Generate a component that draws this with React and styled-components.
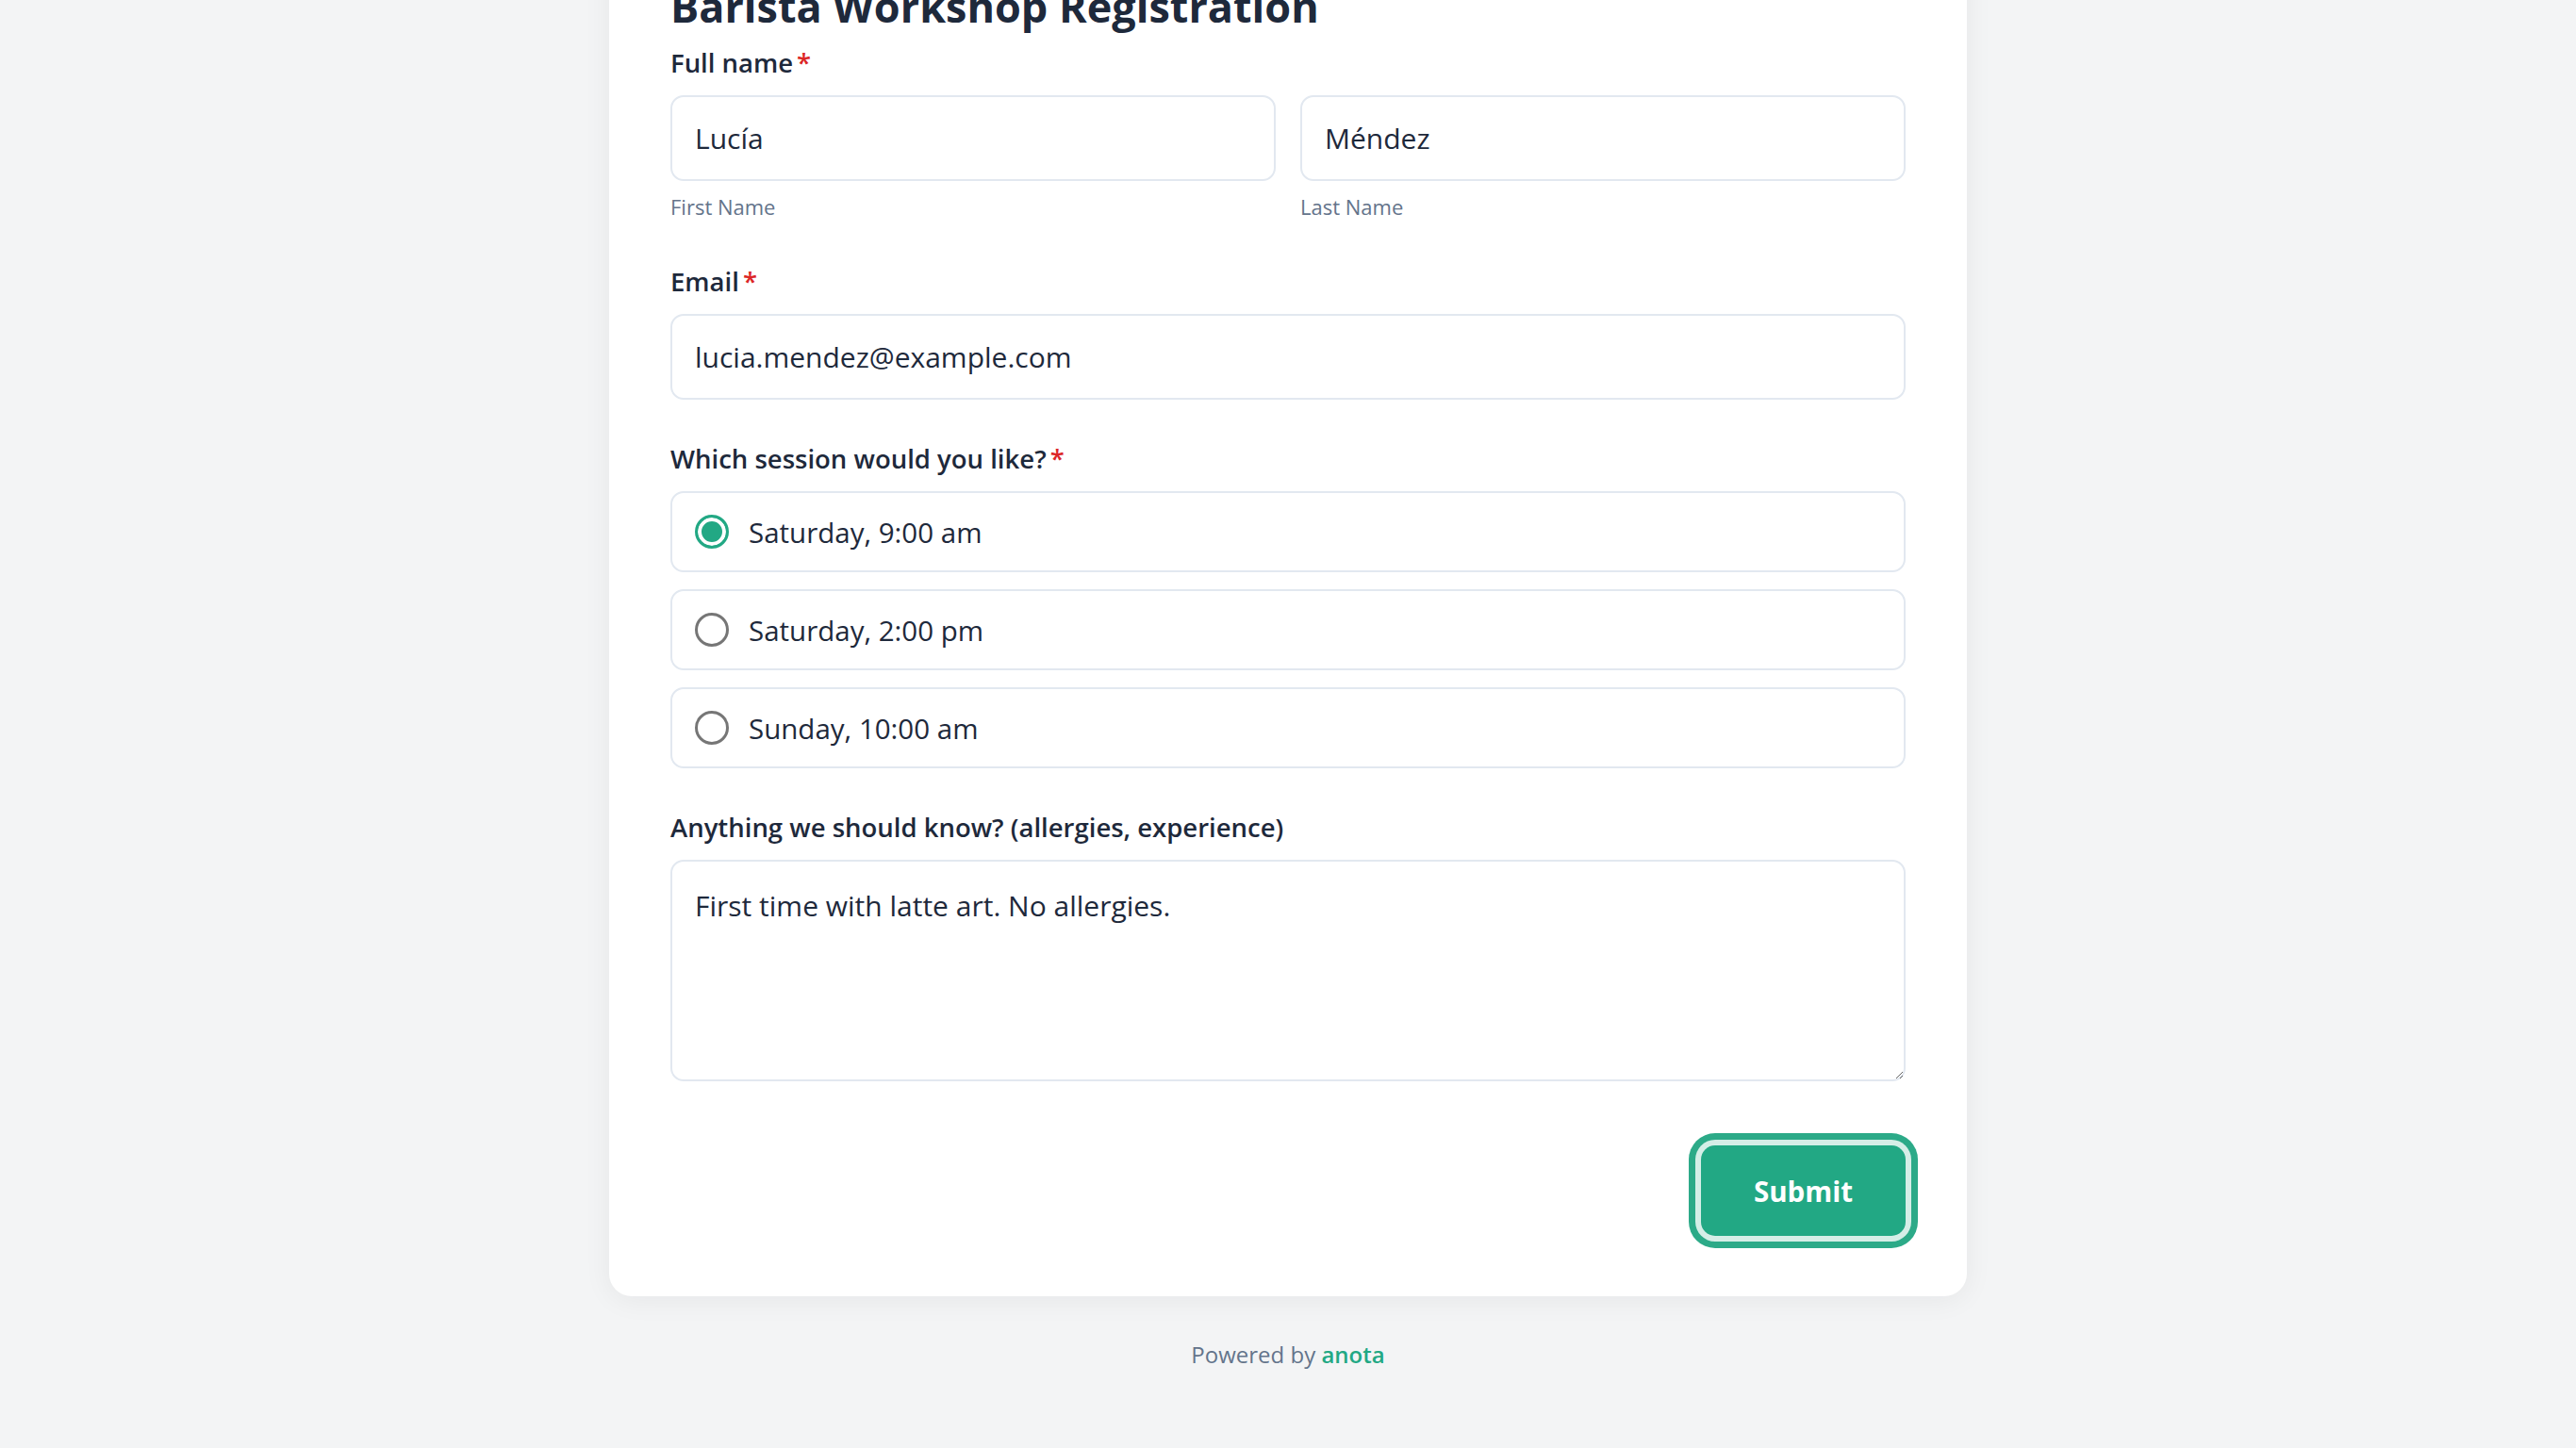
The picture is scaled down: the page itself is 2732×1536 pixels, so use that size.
import styled, { createGlobalStyle } from 'styled-components'

const GlobalStyle = createGlobalStyle`
    html, body {
        margin: 0;
        padding: 0;
        background-color: #f3f4f5;
        font-family: "Open Sans", "Noto Sans", sans-serif;
        color: #1e293b;
    }
    * {
        box-sizing: border-box;
    }
`

const Page = styled.div`
    min-height: 1536px;
    padding-bottom: 60px;
`
const Card = styled.form`
    width: 1440px;
    margin: -86px auto 0;
    padding: 65px 65px 64px;
    background-color: white;
    border-radius: 24px;
    box-shadow: 0 4px 30px rgba(15, 23, 42, 0.06);
`
const Title = styled.h1`
    margin: 0 0 11px;
    font-size: 45px;
    line-height: 56px;
    font-weight: 700;
    color: #1e293b;
`
const Field = styled.div`
    margin-bottom: 42px;
`
const Label = styled.div`
    font-size: 27.5px;
    line-height: 42px;
    font-weight: 600;
    color: #1e293b;
    margin-bottom: 13px;
`
const Required = styled.span`
    color: #dc2626;
    margin-left: 4px;
`
const NameRow = styled.div`
    display: grid;
    grid-template-columns: 1fr 1fr;
    gap: 26px;
`
const Input = styled.input`
    display: block;
    width: 100%;
    height: 91px;
    padding: 0 24px;
    border: 2px solid #e2e8f0;
    border-radius: 14px;
    font-family: inherit;
    font-size: 30px;
    color: #1e293b;
    background: white;
    outline: none;
`
const Helper = styled.div`
    margin-top: 11px;
    font-size: 22px;
    line-height: 33px;
    color: #64748b;
`
const Options = styled.div`
    display: flex;
    flex-direction: column;
    gap: 18px;
`
const Option = styled.label`
    display: flex;
    align-items: center;
    gap: 21px;
    height: 86px;
    padding: 0 24px;
    border: 2px solid #e2e8f0;
    border-radius: 14px;
    font-size: 29.5px;
    color: #1e293b;
    cursor: pointer;
`
const Radio = styled.input`
    appearance: none;
    margin: 0;
    width: 36px;
    height: 36px;
    flex: none;
    border-radius: 50%;
    border: 3px solid #767676;
    background: white;

    &:checked {
        border-color: #22a884;
        background: #22a884;
        box-shadow: inset 0 0 0 4px white;
    }
`
const TextArea = styled.textarea`
    display: block;
    width: 100%;
    height: 235px;
    padding: 25px 24px;
    border: 2px solid #e2e8f0;
    border-radius: 14px;
    font-family: inherit;
    font-size: 30px;
    line-height: 44px;
    color: #1e293b;
    resize: vertical;
    outline: none;
`
const Actions = styled.div`
    display: flex;
    justify-content: flex-end;
    margin-top: 68px;
`
const SubmitButton = styled.button`
    width: 217px;
    height: 96px;
    border: none;
    border-radius: 15px;
    background-color: #22a884;
    color: white;
    font-family: inherit;
    font-size: 29.5px;
    font-weight: 700;
    box-shadow: 0 0 0 6px #d5eee7, 0 0 0 13px #2caa88;
    cursor: pointer;
`
const Footer = styled.div`
    margin-top: 44px;
    text-align: center;
    font-size: 24px;
    line-height: 35px;
    color: #64748b;
`
const Brand = styled.span`
    color: #22a884;
    font-weight: 600;
`

const sessions = [
    'Saturday, 9:00 am',
    'Saturday, 2:00 pm',
    'Sunday, 10:00 am',
]

const App = () => {
    return (
        <Page>
            <GlobalStyle />
            <Card onSubmit={e => e.preventDefault()}>
                <Title>Barista Workshop Registration</Title>

                <Field>
                    <Label>Full name<Required>*</Required></Label>
                    <NameRow>
                        <div>
                            <Input defaultValue="Lucía" />
                            <Helper>First Name</Helper>
                        </div>
                        <div>
                            <Input defaultValue="Méndez" />
                            <Helper>Last Name</Helper>
                        </div>
                    </NameRow>
                </Field>

                <Field>
                    <Label>Email<Required>*</Required></Label>
                    <Input type="email" defaultValue="lucia.mendez@example.com" />
                </Field>

                <Field>
                    <Label>Which session would you like?<Required>*</Required></Label>
                    <Options>
                        {sessions.map((s, i) => (
                            <Option key={s}>
                                <Radio type="radio" name="session" defaultChecked={i === 0} />
                                {s}
                            </Option>
                        ))}
                    </Options>
                </Field>

                <Field>
                    <Label>Anything we should know? (allergies, experience)</Label>
                    <TextArea defaultValue="First time with latte art. No allergies." />
                </Field>

                <Actions>
                    <SubmitButton type="submit">Submit</SubmitButton>
                </Actions>
            </Card>
            <Footer>Powered by <Brand>anota</Brand></Footer>
        </Page>
    )
}

export default App
